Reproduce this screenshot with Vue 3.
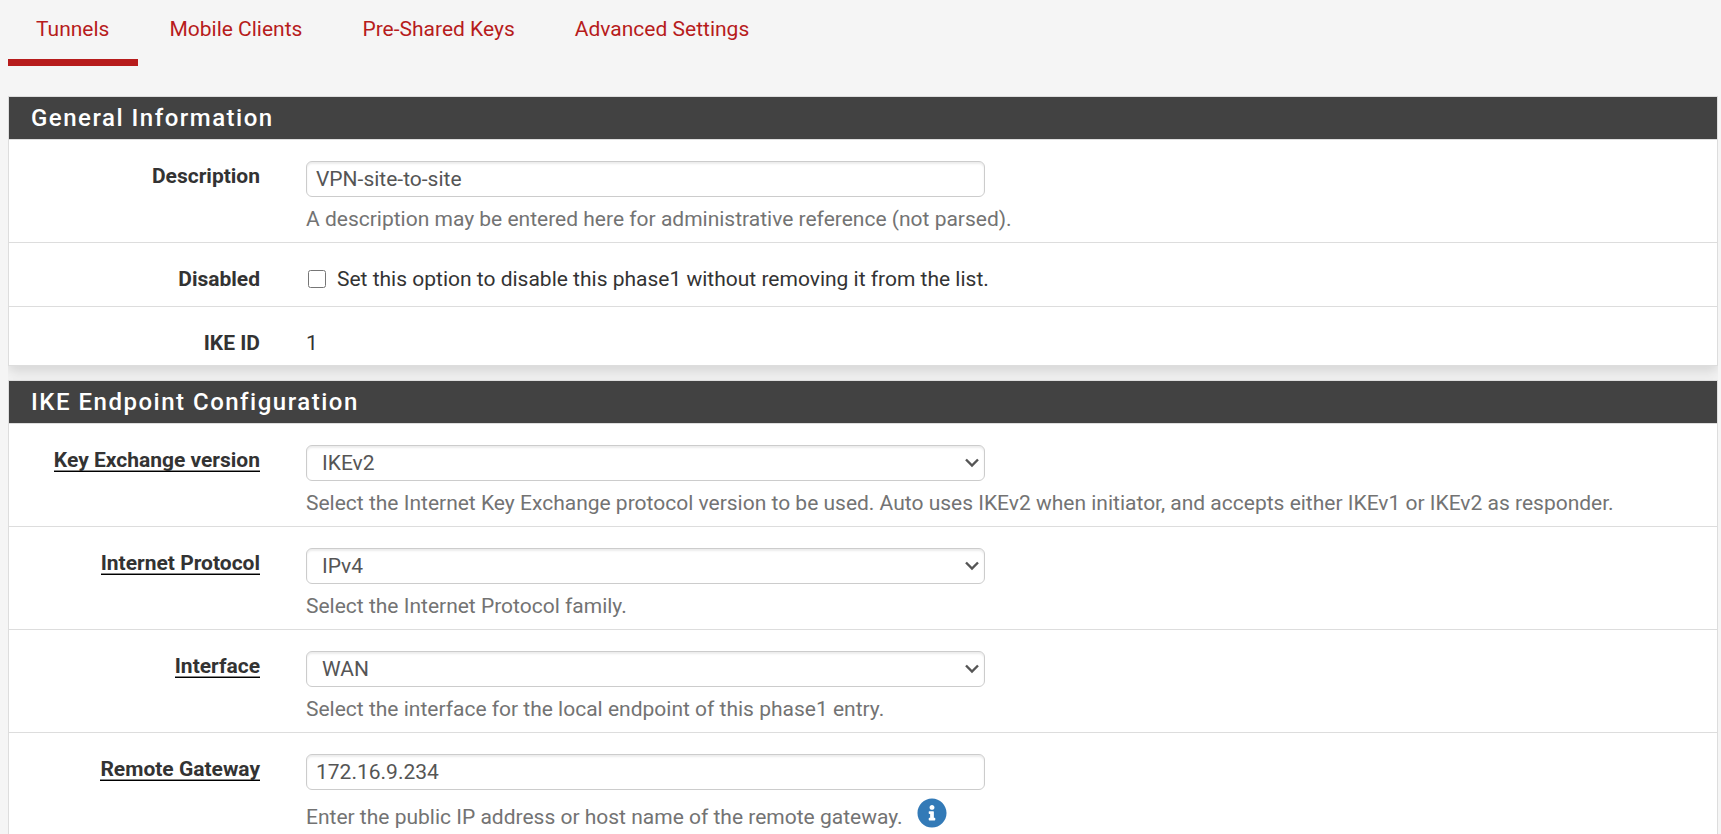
<script setup>
import { ref } from 'vue'

const tabs = ['Tunnels', 'Mobile Clients', 'Pre-Shared Keys', 'Advanced Settings']
const activeTab = ref('Tunnels')

const description = ref('VPN-site-to-site')
const disabled = ref(false)
const gateway = ref('172.16.9.234')

const selects = ref([
  {
    id: 'iketype',
    label: 'Key Exchange version',
    value: 'IKEv2',
    options: ['IKEv1', 'IKEv2', 'Auto'],
    help: 'Select the Internet Key Exchange protocol version to be used. Auto uses IKEv2 when initiator, and accepts either IKEv1 or IKEv2 as responder.',
  },
  {
    id: 'protocol',
    label: 'Internet Protocol',
    value: 'IPv4',
    options: ['IPv4', 'IPv6'],
    help: 'Select the Internet Protocol family.',
  },
  {
    id: 'interface',
    label: 'Interface',
    value: 'WAN',
    options: ['WAN', 'LAN'],
    help: 'Select the interface for the local endpoint of this phase1 entry.',
  },
])
</script>

<template>
  <div class="page">
    <nav class="tabs">
      <a
        v-for="tab in tabs"
        :key="tab"
        href="#"
        class="tab"
        :class="{ active: tab === activeTab }"
        @click.prevent="activeTab = tab"
      >{{ tab }}</a>
    </nav>

    <form class="panels" @submit.prevent>
      <section class="panel">
        <h2 class="heading">General Information</h2>
        <div class="row">
          <label class="name" for="descr">Description</label>
          <div class="field">
            <input id="descr" v-model="description" class="control" type="text" />
            <p class="help">A description may be entered here for administrative reference (not parsed).</p>
          </div>
        </div>
        <div class="row">
          <span class="name">Disabled</span>
          <div class="field">
            <label class="check">
              <input v-model="disabled" type="checkbox" />
              <span>Set this option to disable this phase1 without removing it from the list.</span>
            </label>
          </div>
        </div>
        <div class="row">
          <span class="name">IKE ID</span>
          <div class="field">1</div>
        </div>
      </section>

      <section class="panel">
        <h2 class="heading">IKE Endpoint Configuration</h2>
        <div v-for="item in selects" :key="item.id" class="row">
          <label class="name" :for="item.id"><span class="required">{{ item.label }}</span></label>
          <div class="field">
            <div class="picker">
              <select :id="item.id" v-model="item.value" class="control">
                <option v-for="option in item.options" :key="option">{{ option }}</option>
              </select>
              <svg class="chevron" viewBox="0 0 14 10" aria-hidden="true">
                <path d="M1 1.5 7 7.5 13 1.5" />
              </svg>
            </div>
            <p class="help">{{ item.help }}</p>
          </div>
        </div>
        <div class="row">
          <label class="name" for="gateway"><span class="required">Remote Gateway</span></label>
          <div class="field">
            <input id="gateway" v-model="gateway" class="control" type="text" />
            <p class="help">
              Enter the public IP address or host name of the remote gateway.
              <button class="info" type="button" aria-label="More information">
                <svg viewBox="0 0 512 512" aria-hidden="true">
                  <path d="M256 8C119.043 8 8 119.083 8 256c0 136.997 111.043 248 248 248s248-111.003 248-248C504 119.083 392.957 8 256 8zm0 110c23.196 0 42 18.804 42 42s-18.804 42-42 42-42-18.804-42-42 18.804-42 42-42zm56 254c0 6.627-5.373 12-12 12h-88c-6.627 0-12-5.373-12-12v-24c0-6.627 5.373-12 12-12h12v-64h-12c-6.627 0-12-5.373-12-12v-24c0-6.627 5.373-12 12-12h64c6.627 0 12 5.373 12 12v100h12c6.627 0 12 5.373 12 12v24z" />
                </svg>
              </button>
            </p>
          </div>
        </div>
      </section>
    </form>
  </div>
</template>

<style>
body {
  margin: 0;
  background: #f5f5f5;
}
</style>

<style scoped>
.page {
  padding: 0 3px 0 8px;
  font-family: Roboto, "Liberation Sans", sans-serif;
  font-size: 21px;
  line-height: 30px;
  color: #333;
}

.tabs {
  display: flex;
  gap: 3px;
  margin-bottom: 30px;
}

.tab {
  padding: 14px 29px 15px 28px;
  border-bottom: 7px solid transparent;
  color: #b71c1c;
  text-decoration: none;
}

.tab.active {
  border-bottom-color: #b71c1c;
}

.panels {
  display: flex;
  flex-direction: column;
  gap: 14px;
  overflow: hidden;
}

.panel {
  border: 1px solid #ddd;
  background: #fff;
  box-shadow: 0 6px 12px rgba(0, 0, 0, 0.13);
}

.heading {
  margin: 0;
  padding: 6px 22px;
  border-bottom: 1px solid #ddd;
  background: #424242;
  color: #fff;
  font-size: 24px;
  font-weight: 500;
  line-height: 30px;
  letter-spacing: 1.5px;
}

.row {
  display: grid;
  grid-template-columns: 251px 1fr;
  column-gap: 46px;
  padding: 21px 0 8px;
  border-bottom: 1px solid #ddd;
}

.row:last-child {
  padding-bottom: 7px;
  border-bottom: 0;
}

.name {
  font-weight: 700;
  text-align: right;
}

.required {
  box-shadow: inset 0 -1px #000, inset 0 -2px #888;
}

.control {
  display: block;
  box-sizing: border-box;
  width: calc(50% - 27px);
  height: 36px;
  margin: 0;
  padding: 0 9px;
  border: 1px solid #ccc;
  border-radius: 6px;
  background: #fff;
  box-shadow: inset 0 2px 2px rgba(0, 0, 0, 0.075);
  color: #555;
  font: inherit;
}

.picker {
  display: grid;
  align-items: center;
  width: calc(50% - 27px);
}

.picker .control {
  grid-area: 1 / 1;
  width: 100%;
  padding: 0 30px 0 15px;
  appearance: none;
}

.chevron {
  grid-area: 1 / 1;
  justify-self: end;
  width: 14px;
  height: 10px;
  margin-right: 6px;
  fill: none;
  stroke: #555;
  stroke-width: 2.4;
  pointer-events: none;
}

.help {
  margin: 7px 0 0;
  color: #737373;
}

.check {
  display: flex;
  align-items: center;
  padding-bottom: 4px;
}

.check input {
  width: 18px;
  height: 18px;
  margin: 0 11px 0 2px;
}

.info {
  margin: 0 0 0 9px;
  padding: 1px 0 0;
  border: 0;
  background: none;
  vertical-align: -4px;
  line-height: 0;
  cursor: pointer;
}

.info svg {
  display: block;
  width: 30px;
  height: 30px;
  fill: #337ab7;
}
</style>
